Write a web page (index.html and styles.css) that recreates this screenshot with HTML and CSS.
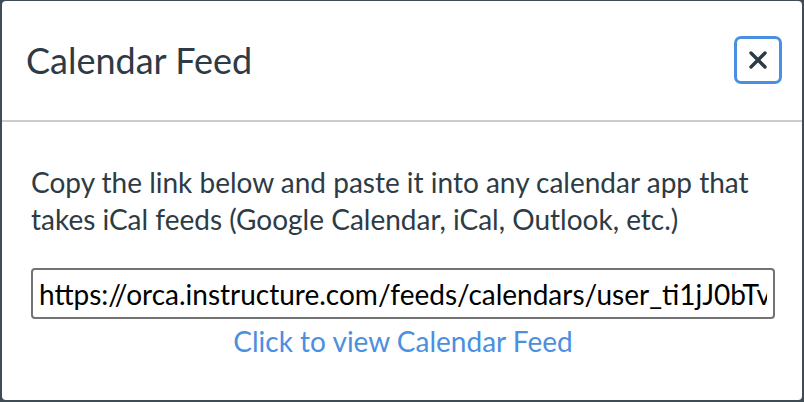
FILE: index.html
```html
<!DOCTYPE html>
<html lang="en">
<head>
<meta charset="utf-8">
<title>Calendar Feed</title>
<link rel="stylesheet" href="styles.css">
</head>
<body>
  <div class="dialog" role="dialog" aria-labelledby="feed-title">
    <div class="dialog-header">
      <h2 class="dialog-title" id="feed-title">Calendar Feed</h2>
      <button class="close-btn" type="button" aria-label="Close">
        <svg width="20" height="20" viewBox="0 0 20 20" aria-hidden="true">
          <path d="M3 3 L17 17 M17 3 L3 17" stroke="#2d3b45" stroke-width="3.4" stroke-linecap="round"/>
        </svg>
      </button>
    </div>
    <div class="dialog-body">
      <p class="feed-help">Copy the link below and paste it into any calendar app that takes iCal feeds (Google Calendar, iCal, Outlook, etc.)</p>
      <input class="feed-url" type="text" readonly value="https://orca.instructure.com/feeds/calendars/user_ti1jJ0bTvXq8Lm2Rk5Wz.ics">
      <a class="feed-link" href="#">Click to view Calendar Feed</a>
    </div>
  </div>
</body>
</html>
```
FILE: styles.css
```css
html, body {
  margin: 0;
  padding: 0;
}

body {
  background: #3f4b55;
  height: 402px;
  overflow: hidden;
  font-family: Lato, "Noto Sans", sans-serif;
  color: #2d3b45;
}

.dialog {
  margin: 1px 2px 2px 2px;
  height: 399px;
  background: #ffffff;
  border-radius: 4px;
  display: flex;
  flex-direction: column;
}

.dialog-header {
  height: 119px;
  flex: none;
  display: flex;
  align-items: center;
  justify-content: space-between;
  padding: 0 20px 0 24px;
  border-bottom: 2px solid #c7cdd1;
}

.dialog-title {
  margin: 0;
  font-size: 36px;
  font-weight: 400;
  line-height: 1.2;
}

.close-btn {
  width: 48px;
  height: 48px;
  margin-bottom: 2px;
  box-sizing: border-box;
  border: 3px solid #4a90e2;
  border-radius: 7px;
  background: #ffffff;
  display: flex;
  align-items: center;
  justify-content: center;
  padding: 0;
}

.dialog-body {
  padding: 42px 27px 0 29px;
  display: flex;
  flex-direction: column;
}

.feed-help {
  margin: 0;
  font-size: 28px;
  line-height: 37px;
}

.feed-url {
  margin-top: 30px;
  height: 51px;
  box-sizing: border-box;
  border: 2px solid #737373;
  border-radius: 4px;
  padding: 0 6px;
  font-family: Lato, "Noto Sans", sans-serif;
  font-size: 28px;
  color: #000000;
  background: #ffffff;
  outline: none;
}

.feed-link {
  align-self: center;
  margin-top: 4px;
  font-size: 28px;
  line-height: 36px;
  color: #4a8fe0;
  text-decoration: none;
}
```
